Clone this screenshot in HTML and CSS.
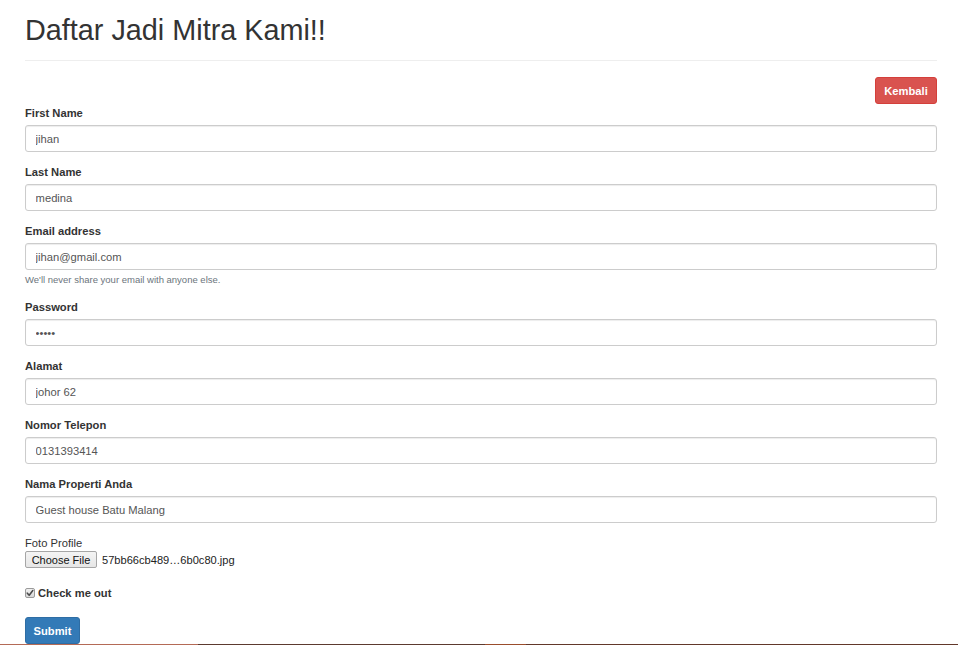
FILE: index.html
```html
<!DOCTYPE html>
<html lang="id">
<head>
<meta charset="utf-8">
<title>Daftar Jadi Mitra Kami!!</title>
<link rel="stylesheet" href="styles.css">
</head>
<body>
<div class="container">
  <h1 class="title">Daftar Jadi Mitra Kami!!</h1>
  <hr class="divider">
  <div class="top-actions">
    <a class="btn btn-danger" href="#">Kembali</a>
  </div>
  <form class="form">
    <div class="form-group">
      <label class="label">First Name</label>
      <input class="input" type="text" value="jihan">
    </div>
    <div class="form-group">
      <label class="label">Last Name</label>
      <input class="input" type="text" value="medina">
    </div>
    <div class="form-group">
      <label class="label">Email address</label>
      <input class="input" type="email" value="jihan@gmail.com">
      <small class="help">We'll never share your email with anyone else.</small>
    </div>
    <div class="form-group">
      <label class="label">Password</label>
      <input class="input" type="password" value="12345">
    </div>
    <div class="form-group">
      <label class="label">Alamat</label>
      <input class="input" type="text" value="johor 62">
    </div>
    <div class="form-group">
      <label class="label">Nomor Telepon</label>
      <input class="input" type="text" value="0131393414">
    </div>
    <div class="form-group">
      <label class="label">Nama Properti Anda</label>
      <input class="input" type="text" value="Guest house Batu Malang">
    </div>
    <div class="form-group">
      <div class="label-plain">Foto Profile</div>
      <div class="file-row">
        <span class="file-btn">Choose File</span>
        <span class="file-name">57bb66cb489…6b0c80.jpg</span>
      </div>
    </div>
    <div class="check-row">
      <svg class="check-box" width="10" height="10" viewBox="0 0 10 10" aria-hidden="true">
        <defs>
          <linearGradient id="cbg" x1="0" y1="0" x2="0" y2="1">
            <stop offset="0" stop-color="#f2f2f2"/>
            <stop offset="1" stop-color="#d6d6d6"/>
          </linearGradient>
        </defs>
        <rect x="0.5" y="0.5" width="9" height="9" rx="1.5" fill="url(#cbg)" stroke="#9a9a9a"/>
        <path d="M2.3 5.2 L4.2 7.2 L7.8 2.6" fill="none" stroke="#4a4a4a" stroke-width="1.6" stroke-linecap="round" stroke-linejoin="round"/>
      </svg>
      <span class="check-label">Check me out</span>
    </div>
    <button class="btn btn-primary" type="button">Submit</button>
  </form>
</div>
<div class="footer-strip"></div>
</body>
</html>
```

FILE: styles.css
```css
* {
  box-sizing: border-box;
}

html, body {
  margin: 0;
  padding: 0;
  background: #fff;
}

body {
  font-family: "Liberation Sans", Arial, Helvetica, sans-serif;
  font-size: 11.2px;
  line-height: 16px;
  color: #333;
  overflow: hidden;
  height: 645px;
}

.container {
  padding: 0 21px 0 25px;
}

.title {
  margin: 14px 0 0;
  font-size: 28.8px;
  line-height: 32px;
  font-weight: 500;
  color: #333;
}

.divider {
  margin: 14px 0 16px;
  border: 0;
  border-top: 1px solid #eee;
  height: 0;
}

.top-actions {
  display: flex;
  justify-content: flex-end;
  margin-bottom: 1px;
}

.btn {
  display: inline-flex;
  align-items: center;
  justify-content: center;
  height: 27px;
  padding: 0 8px;
  border: 1px solid transparent;
  border-radius: 3px;
  font-family: inherit;
  font-size: 11.2px;
  font-weight: 700;
  color: #fff;
  text-decoration: none;
  cursor: pointer;
}

.btn-danger {
  background: #d9534f;
  border-color: #d43f3a;
  width: 62px;
}

.btn-primary {
  background: #337ab7;
  border-color: #2e6da4;
  width: 55px;
}

.form {
  display: flex;
  flex-direction: column;
  align-items: stretch;
}

.form .btn-primary {
  align-self: flex-start;
}

.form-group {
  display: flex;
  flex-direction: column;
  margin-bottom: 12px;
}

.label {
  display: block;
  font-weight: 700;
  line-height: 16px;
  margin-bottom: 4px;
  color: #333;
}

.label-plain {
  line-height: 16px;
  color: #333;
}

.input {
  display: block;
  width: 100%;
  height: 27px;
  padding: 4px 9.6px;
  font-family: inherit;
  font-size: 11.2px;
  line-height: 16px;
  color: #555;
  background: #fff;
  border: 1px solid #ccc;
  border-radius: 3px;
  box-shadow: inset 0 1px 1px rgba(0, 0, 0, 0.075);
  outline: none;
}

.help {
  display: block;
  margin-top: 3px;
  font-size: 9.5px;
  line-height: 14px;
  color: #6c757d;
}

.file-row {
  display: flex;
  align-items: center;
  gap: 5px;
  height: 17px;
}

.file-btn {
  display: inline-flex;
  align-items: center;
  justify-content: center;
  height: 17px;
  width: 72px;
  background: linear-gradient(#f4f4f4, #e6e6e6);
  border: 1px solid #a6a6a6;
  border-radius: 2px;
  font-size: 11px;
  color: #111;
}

.file-name {
  font-size: 11.1px;
  color: #222;
}

.check-row {
  display: flex;
  align-items: center;
  gap: 3px;
  height: 16px;
  margin-top: 5px;
  margin-bottom: 16px;
}

.check-box {
  display: block;
  flex: none;
  margin-top: -1px;
}

.check-label {
  font-weight: 700;
  color: #333;
}

.footer-strip {
  height: 30px;
  margin-top: 0;
  background: linear-gradient(to right,
    #b46a56 0, #b46a56 198px,
    #5c3a2f 198px, #5c3a2f 485px,
    #9a4d2c 485px, #9a4d2c 526px,
    #62382a 526px, #62382a 100%);
}
```
